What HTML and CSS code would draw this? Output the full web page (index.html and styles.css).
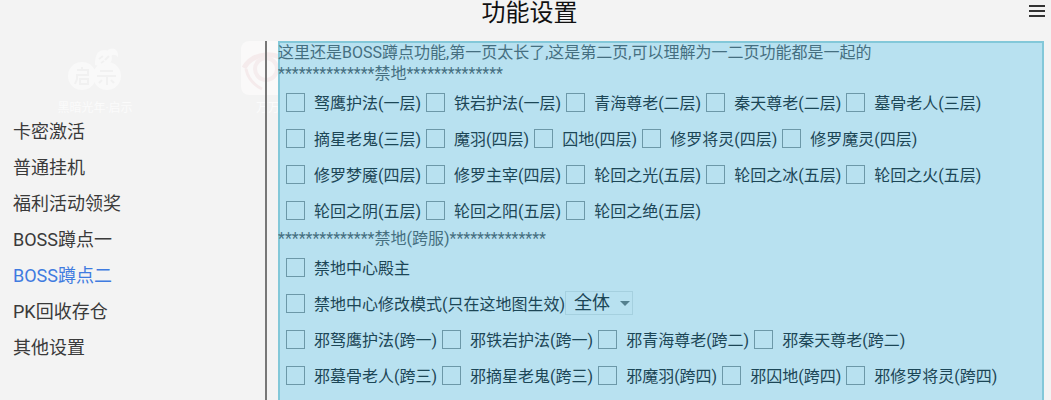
FILE: index.html
```
<!DOCTYPE html>
<html lang="zh-CN">
<head>
  <meta charset="UTF-8">
  <meta name="viewport" content="width=device-width, initial-scale=1">
  <title>功能设置</title>
  <link rel="stylesheet" href="styles.css">
</head>
<body>

  <!-- Home screen showing through the overlay -->
  <div class="backdrop" aria-hidden="true">
    <div class="app app-game">
      <svg width="54" height="54" viewBox="0 0 54 54">
        <g fill="#f9f9f9">
          <circle cx="14" cy="35" r="14"/>
          <circle cx="39" cy="35" r="14"/>
          <circle cx="36" cy="17" r="8"/>
          <path d="M27 22c0-10 6-13 12-12 5-5 12-2 11 6-3-3-6-3-8 0 2 6-4 12-15 8z"/>
        </g>
        <g fill="none" stroke="#f1f1f1" stroke-width="2">
          <path d="M14 26v3M9 29h11v5H9v4l-2 5M12 38h8v5h-8zM32 30h13M29 35h19M39 35v9M34 39l-3 3M43 39l3 3"/>
          <path d="M31 18l4-3M37 19l4-4M33 22l3-2"/>
        </g>
      </svg>
      <span>黑暗光年·启示</span>
    </div>
    <div class="app app-eye">
      <svg width="54" height="54" viewBox="0 0 54 54">
        <rect width="54" height="54" rx="8" fill="#faf9f9"/>
        <path d="M3 27C12 11 36 9 50 24" fill="none" stroke="#f5ebec" stroke-width="5"/>
        <path d="M5 28c2 10 8 16 16 20" fill="none" stroke="#f5ebec" stroke-width="3"/>
        <circle cx="25" cy="28" r="11" fill="none" stroke="#f5edee" stroke-width="4"/>
      </svg>
      <span>万万</span>
    </div>
  </div>

  <header class="header">
    <h1>功能设置</h1>
    <button type="button" class="menu-btn" aria-label="菜单">
      <svg width="16" height="14" viewBox="0 0 16 14" fill="#333">
        <rect y="0" width="16" height="2"/>
        <rect y="5" width="16" height="2"/>
        <rect y="10" width="16" height="2"/>
      </svg>
    </button>
  </header>

  <div class="main">
    <nav class="sidebar">
      <a href="#">卡密激活</a>
      <a href="#">普通挂机</a>
      <a href="#">福利活动领奖</a>
      <a href="#">BOSS蹲点一</a>
      <a href="#" class="active" aria-current="page">BOSS蹲点二</a>
      <a href="#">PK回收存仓</a>
      <a href="#">其他设置</a>
    </nav>

    <form class="panel">
      <p>这里还是BOSS蹲点功能,第一页太长了,这是第二页,可以理解为一二页功能都是一起的</p>
      <p>**************禁地**************</p>
      <div class="row">
        <label><input type="checkbox">驽鹰护法(一层)</label>
        <label><input type="checkbox">铁岩护法(一层)</label>
        <label><input type="checkbox">青海尊老(二层)</label>
        <label><input type="checkbox">秦天尊老(二层)</label>
        <label><input type="checkbox">墓骨老人(三层)</label>
      </div>
      <div class="row">
        <label><input type="checkbox">摘星老鬼(三层)</label>
        <label><input type="checkbox">魔羽(四层)</label>
        <label><input type="checkbox">囚地(四层)</label>
        <label><input type="checkbox">修罗将灵(四层)</label>
        <label><input type="checkbox">修罗魔灵(四层)</label>
      </div>
      <div class="row">
        <label><input type="checkbox">修罗梦魇(四层)</label>
        <label><input type="checkbox">修罗主宰(四层)</label>
        <label><input type="checkbox">轮回之光(五层)</label>
        <label><input type="checkbox">轮回之冰(五层)</label>
        <label><input type="checkbox">轮回之火(五层)</label>
      </div>
      <div class="row">
        <label><input type="checkbox">轮回之阴(五层)</label>
        <label><input type="checkbox">轮回之阳(五层)</label>
        <label><input type="checkbox">轮回之绝(五层)</label>
      </div>

      <p>**************禁地(跨服)**************</p>
      <div class="row">
        <label><input type="checkbox">禁地中心殿主</label>
      </div>
      <div class="row row-mode">
        <label><input type="checkbox">禁地中心修改模式(只在这地图生效)</label>
        <div class="select-box">
          <select aria-label="禁地中心修改模式">
            <option>全体</option>
          </select>
        </div>
      </div>
      <div class="row">
        <label><input type="checkbox">邪驽鹰护法(跨一)</label>
        <label><input type="checkbox">邪铁岩护法(跨一)</label>
        <label><input type="checkbox">邪青海尊老(跨二)</label>
        <label><input type="checkbox">邪秦天尊老(跨二)</label>
      </div>
      <div class="row">
        <label><input type="checkbox">邪墓骨老人(跨三)</label>
        <label><input type="checkbox">邪摘星老鬼(跨三)</label>
        <label><input type="checkbox">邪魔羽(跨四)</label>
        <label><input type="checkbox">邪囚地(跨四)</label>
        <label><input type="checkbox">邪修罗将灵(跨四)</label>
      </div>
    </form>
  </div>

</body>
</html>
```
FILE: styles.css
```
* {
  box-sizing: border-box;
}

body {
  font-family: Roboto, "Noto Sans CJK SC", sans-serif;
  font-size: 16px;
  margin: 0;
  height: 100vh;
  display: flex;
  flex-direction: column;
  overflow: hidden;
  background-color: #f3f3f3;
}

/* Header */
.header {
  position: relative;
  height: 41px;
  padding-left: 8px;
  flex-shrink: 0;
}

.header h1 {
  margin: 0;
  font-size: 24px;
  line-height: 26px;
  font-weight: normal;
  text-align: center;
  color: #111;
}

.menu-btn {
  position: absolute;
  top: 5px;
  right: 6px;
  padding: 0;
  border: none;
  background: none;
  cursor: pointer;
}

.menu-btn svg {
  display: block;
}

/* Layout */
.main {
  display: flex;
  flex: 1;
  min-height: 0;
  padding-right: 7px;
}

.sidebar {
  display: flex;
  flex-direction: column;
  flex-shrink: 0;
  width: 267px;
  margin-right: 11px;
  padding: 73px 0 0 13px;
  border-right: 2px solid #777;
}

.sidebar a {
  font-size: 18px;
  line-height: 36px;
  color: #3a3a3a;
  text-decoration: none;
}

.sidebar a.active {
  color: #3f7be0;
}

/* Settings panel, the frame runs under the text */
.panel {
  flex: 1;
  min-width: 0;
  padding-top: 1px;
  overflow: hidden;
  box-shadow: inset 2px 2px #83c8d9, inset -2px 0 #83c8d9;
  background-color: #b8e1f0;
}

.panel p {
  margin: 0;
  line-height: 21px;
  white-space: nowrap;
  color: #456f80;
}

.row {
  display: flex;
  align-items: center;
  gap: 5px;
  height: 36px;
  padding-left: 8px;
  color: #1c4656;
}

.row-mode {
  gap: 0;
}

.row label {
  display: flex;
  align-items: center;
  gap: 9px;
  white-space: nowrap;
}

input[type="checkbox"] {
  appearance: none;
  width: 19px;
  height: 19px;
  margin: 0;
  border: 1px solid #6c98a8;
}

input[type="checkbox"]:checked {
  background-color: #3f7be0;
}

.select-box {
  position: relative;
}

.select-box::after {
  content: "";
  position: absolute;
  top: 10px;
  right: 3px;
  border: 5px solid transparent;
  border-top-color: #54808f;
  border-bottom: none;
  pointer-events: none;
}

select {
  appearance: none;
  display: block;
  width: 68px;
  height: 24px;
  padding: 0 8px;
  border: 1px solid #a5d0df;
  border-radius: 0;
  background: none;
  font-family: inherit;
  font-size: 18px;
  line-height: 22px;
  color: #1c4656;
}

/* Faint icons behind the page */
.app {
  position: absolute;
  z-index: -1;
  top: 41px;
  width: 80px;
  display: flex;
  flex-direction: column;
  align-items: center;
  gap: 6px;
  font-size: 12px;
  line-height: 14px;
  white-space: nowrap;
  color: #fbfbfb;
}

.app-game {
  left: 55px;
}

.app-eye {
  left: 228px;
}
```
